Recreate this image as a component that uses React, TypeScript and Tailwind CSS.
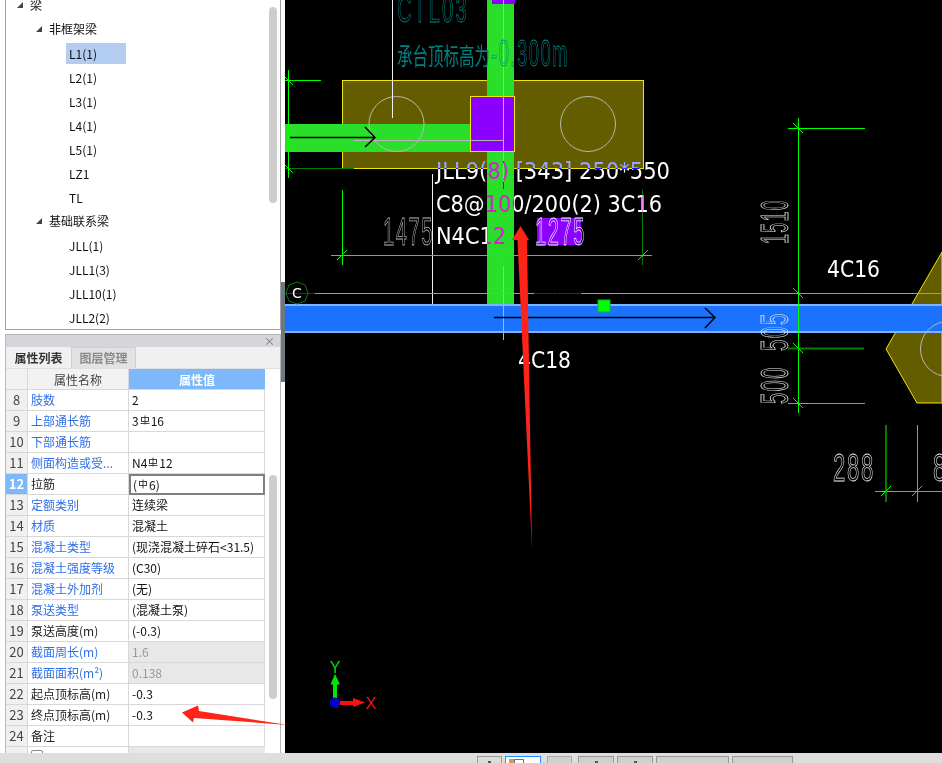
import React from "react";

const font = "font-['Noto_Sans_CJK_SC','Noto_Sans',sans-serif]";

type Row = { n: number; name: string; value: React.ReactNode; blue?: boolean; gray?: boolean };

const Rebar = ({ plain }: { plain?: boolean }) => (
  <svg width="10" height="11" viewBox="0 0 10 11" className="inline-block -mt-[5px] mx-[1px]" fill="none" stroke="#333" strokeWidth="0.9">
    <rect x="1.5" y="2.5" width="7" height="4" />
    <path d="M5 0.5v9" />
    {!plain && <path d="M0.5 8.5h9" />}
  </svg>
);

const rows: Row[] = [
  { n: 8, name: "肢数", value: "2", blue: true },
  { n: 9, name: "上部通长筋", value: <>3<Rebar />16</>, blue: true },
  { n: 10, name: "下部通长筋", value: "", blue: true },
  { n: 11, name: "侧面构造或受...", value: <>N4<Rebar />12</>, blue: true },
  { n: 12, name: "拉筋", value: <>(<Rebar plain />6)</> },
  { n: 13, name: "定额类别", value: "连续梁", blue: true },
  { n: 14, name: "材质", value: "混凝土", blue: true },
  { n: 15, name: "混凝土类型", value: "(现浇混凝土碎石<31.5)", blue: true },
  { n: 16, name: "混凝土强度等级", value: "(C30)", blue: true },
  { n: 17, name: "混凝土外加剂", value: "(无)", blue: true },
  { n: 18, name: "泵送类型", value: "(混凝土泵)", blue: true },
  { n: 19, name: "泵送高度(m)", value: "(-0.3)" },
  { n: 20, name: "截面周长(m)", value: "1.6", blue: true, gray: true },
  { n: 21, name: "截面面积(m²)", value: "0.138", blue: true, gray: true },
  { n: 22, name: "起点顶标高(m)", value: "-0.3" },
  { n: 23, name: "终点顶标高(m)", value: "-0.3" },
  { n: 24, name: "备注", value: "" },
];

const Caret = ({ className }: { className: string }) => (
  <svg width="6" height="6" viewBox="0 0 6 6" className={className}>
    <path d="M6 0V6H0Z" fill="#444" />
  </svg>
);

function TreeRow({ label, level, active }: { label: string; level: 0 | 1 | 2; active?: boolean }) {
  if (level === 2) {
    return (
      <div className="h-6 flex items-center pl-[60px]">
        <span className={`w-[60px] h-[21px] pl-[3px] leading-[21px] ${active ? "bg-[#b2cdf0]" : ""}`}>{label}</span>
      </div>
    );
  }
  return (
    <div className={`h-6 flex items-center ${level === 0 ? "pl-[11px]" : "pl-[30px]"}`}>
      <Caret className="mr-[7px]" />
      <span>{label}</span>
    </div>
  );
}

function Tree() {
  return (
    <div className="h-[330px] border-l border-r border-b border-[#a0a0a0] bg-white overflow-hidden relative text-[12px] text-[#111]">
      <div className="-mt-[7px]">
        <TreeRow label="梁" level={0} />
        <TreeRow label="非框架梁" level={1} />
        <TreeRow label="L1(1)" level={2} active />
        <TreeRow label="L2(1)" level={2} />
        <TreeRow label="L3(1)" level={2} />
        <TreeRow label="L4(1)" level={2} />
        <TreeRow label="L5(1)" level={2} />
        <TreeRow label="LZ1" level={2} />
        <TreeRow label="TL" level={2} />
        <TreeRow label="基础联系梁" level={1} />
        <TreeRow label="JLL(1)" level={2} />
        <TreeRow label="JLL1(3)" level={2} />
        <TreeRow label="JLL10(1)" level={2} />
        <TreeRow label="JLL2(2)" level={2} />
      </div>
      <div className="absolute left-[263px] top-[7px] w-2 h-[196px] rounded bg-[#cdcdcd]" />
    </div>
  );
}

function PropertyRow({ row }: { row: Row }) {
  const selected = row.n === 12;
  return (
    <div className="flex w-[259px] h-[21px] border-b border-[#d8d8d8] leading-[20px]">
      <div className={`w-[22px] shrink-0 text-center text-[13px] border-r border-[#d8d8d8] ${selected ? "bg-[#7db8fb] text-white font-bold" : "bg-[#f0f0f0] text-[#444]"}`}>
        {row.n}
      </div>
      <div className={`w-[101px] shrink-0 pl-[3px] whitespace-nowrap border-r border-[#d8d8d8] ${row.blue ? "text-[#2f6fe8]" : "text-[#222]"}`}>
        {row.name}
      </div>
      {selected ? (
        <div className="w-[136px] h-[21px] shrink-0 pl-[2px] whitespace-nowrap border-2 border-[#808080] leading-[17px] text-[#111]">
          {row.value}
        </div>
      ) : (
        <div className={`w-[136px] shrink-0 pl-[3px] whitespace-nowrap border-r border-[#d8d8d8] ${row.gray ? "bg-[#e8e8e8] text-[#999]" : "text-[#111]"}`}>
          {row.value}
        </div>
      )}
    </div>
  );
}

function Properties() {
  return (
    <div className="mt-[4px] flex-1 border-l border-r border-t border-[#b8b8b8] bg-white overflow-hidden relative text-[12px]">
      <div className="h-[12px] bg-[#d5d6da] flex justify-end items-center pr-[5px] text-[#777] text-[11px] leading-none">×</div>
      <div className="h-[22px] bg-[#f0f0f0] flex border-b border-[#e0e0e0]">
        <div className="w-[65px] text-center leading-[21px] text-[#333] font-bold">属性列表</div>
        <div className="w-[65px] text-center leading-[19px] bg-[#e2e2e2] text-[#8a8a8a] border-l border-r border-t border-[#d0d0d0] font-bold">图层管理</div>
      </div>
      <div className="flex w-[259px] h-[21px] border-b border-[#d8d8d8] leading-[21px]">
        <div className="w-[22px] shrink-0 bg-[#f2f2f2] border-r border-[#d8d8d8]" />
        <div className="w-[101px] shrink-0 bg-[#f2f2f2] text-center text-[#444] border-r border-[#d8d8d8]">属性名称</div>
        <div className="w-[136px] shrink-0 bg-[#7db8fb] text-center text-white font-bold">属性值</div>
      </div>
      {rows.map((row) => (
        <PropertyRow key={row.n} row={row} />
      ))}
      <div className="flex w-[259px] h-[21px] leading-[20px]">
        <div className="w-[22px] shrink-0 bg-[#f0f0f0] border-r border-[#d8d8d8]" />
        <div className="w-[101px] shrink-0 pl-[3px] border-r border-[#d8d8d8]">
          <span className="inline-block mt-[3px] w-[12px] h-[12px] border border-[#888] rounded-[2px] bg-white" />
        </div>
        <div className="w-[136px] shrink-0 bg-[#e8e8e8]" />
      </div>
      <div className="absolute left-[263px] top-[140px] w-2 h-[224px] rounded bg-[#cdcdcd]" />
    </div>
  );
}

const DIM = "#00ff00";
const DARK = "#008000";

const Tick = ({ x, y, c = DIM }: { x: number; y: number; c?: string }) => (
  <path d={`M${x - 5} ${y + 5}L${x + 5} ${y - 5}`} stroke={c} strokeWidth="1" />
);
const TickB = ({ x, y }: { x: number; y: number }) => (
  <path d={`M${x - 5} ${y - 5}L${x + 5} ${y + 5}`} stroke={DIM} strokeWidth="1" />
);

// offsets: drawing coordinates are page pixels, canvas starts at x=285
function Drawing() {
  return (
    <svg viewBox="285 0 657 753" className="block w-full h-full" fontFamily="'DejaVu Sans',sans-serif">
      {/* pile caps */}
      <rect x="342.5" y="80.5" width="301" height="88" fill="#635d00" stroke="#f0e800" strokeWidth="1" />
      <path d="M942 252L886 349L917 403H942Z" fill="#635d00" stroke="#f0e800" strokeWidth="1" />

      {/* beams */}
      <rect x="487" y="0" width="27" height="305" fill="#2adf2a" />
      <rect x="285" y="124" width="186" height="28" fill="#2adf2a" />
      <rect x="285" y="304" width="657" height="29" fill="#1a72ff" />
      <path d="M285 305H942M285 332H942" stroke="#7cb4ff" strokeWidth="2" />
      <rect x="470.5" y="96.5" width="44" height="55" fill="#8b00ff" stroke="#f0e800" />
      <rect x="492" y="0" width="23" height="4" fill="#8b00ff" />
      <rect x="537" y="218" width="44" height="27" fill="#8b00ff" />

      {/* piles */}
      <circle cx="396.5" cy="124" r="27.5" fill="none" stroke="#b8b8b0" />
      <circle cx="588" cy="124" r="27.5" fill="none" stroke="#b8b8b0" />
      <circle cx="948" cy="349" r="27.5" fill="none" stroke="#b8b8b0" />

      {/* centre lines */}
      <path d="M392.5 0V118M432.5 174V304" stroke="#f0f0f0" />
      <path d="M503.5 0V180M503.5 266V340M354 140.5H503" stroke="#b4b4b4" />
      <path d="M314 293.5H534M581 293.5H942" stroke="#9a9a9a" />
      <path d="M285 293.5H315M534 293.5H557M558 293.5H580" stroke="#a00000" />
      <path d="M503.5 180V189" stroke="#c00000" />

      {/* member arrows */}
      <path d="M290 137.5H374M365 127L375 137.5L365 147" fill="none" stroke="#000" strokeWidth="1.5" />
      <path d="M494 317.5H714M705 308L715 317.5L705 328" fill="none" stroke="#000" strokeWidth="1.5" />
      <rect x="598" y="300" width="12" height="12" fill="#00ff00" stroke="#10b040" />

      {/* dimensions */}
      <path d="M288.5 70V178M285 80.5H321M331 255.5H652M342.5 190V265M798.5 118V413M788 128.5H865M788 293.5H864M788 403.5H865M917.5 425V502M875 491.5H942M503.5 240V262" stroke={DIM} />
      <path d="M642.5 190V265M285 168.5H354" stroke={DARK} strokeWidth="1" />
      <path d="M788 348.5H864M886 425V502" stroke={DARK} strokeWidth="2" />
      <Tick x={342} y={255} />
      <Tick x={643} y={255} />
      <Tick x={503} y={255} />
      <Tick x={886} y={491} />
      <Tick x={917} y={491} />
      <TickB x={288} y={80} />
      <TickB x={288} y={168} />
      <TickB x={798} y={128} />
      <TickB x={798} y={293} />
      <TickB x={798} y={348} />
      <TickB x={798} y={403} />

      {/* axis bubble */}
      <polygon points="297,282 305,285 308,293 305,301 297,304 289,301 286,293 289,285" fill="none" stroke="#0a7a0a" />
      <text x="297" y="298" fontSize="14" fill="#fff" textAnchor="middle">C</text>

      {/* teal note */}
      <text x="397" y="22" fontSize="36" fill="none" stroke="#008a8a" strokeWidth="0.8" letterSpacing="4" fontFamily="'Liberation Sans',sans-serif" textLength="72" lengthAdjust="spacingAndGlyphs">CTL03</text>
      <text x="397" y="65" fontSize="24" fill="#008080" fontFamily="'Noto Sans CJK SC',sans-serif" textLength="93" lengthAdjust="spacingAndGlyphs">承台顶标高为</text>
      <text x="491" y="66" fontSize="36" fill="none" stroke="#008a8a" strokeWidth="0.8" letterSpacing="3" fontFamily="'Liberation Sans',sans-serif" textLength="78" lengthAdjust="spacingAndGlyphs">-0.300m</text>

      {/* beam labels, inverted over what they cross */}
      <g fontSize="23" fill="#fff" className="mix-blend-difference">
        <text x="436" y="179" textLength="234" lengthAdjust="spacingAndGlyphs">JLL9(8) [343] 250*550</text>
        <text x="436" y="212" textLength="226" lengthAdjust="spacingAndGlyphs">C8@100/200(2) 3C16</text>
        <text x="436" y="244" textLength="70" lengthAdjust="spacingAndGlyphs">N4C12</text>
      </g>
      <g fontSize="23" fill="#fff">
        <text x="827" y="277" textLength="53" lengthAdjust="spacingAndGlyphs">4C16</text>
        <text x="518" y="368" textLength="53" lengthAdjust="spacingAndGlyphs">4C18</text>
      </g>

      {/* dimension values, the CAD font is a thin outline */}
      <g fontSize="38" fill="none" stroke="#e8e8e8" strokeWidth="0.8" letterSpacing="3" fontFamily="'Liberation Sans',sans-serif">
        <text x="383" y="245" textLength="51" lengthAdjust="spacingAndGlyphs" stroke="#b8b8b8">1475</text>
        <text x="535" y="245" textLength="51" lengthAdjust="spacingAndGlyphs" stroke="#f4f4ff">1275</text>
        <text x="833" y="481" textLength="42" lengthAdjust="spacingAndGlyphs">288</text>
        <text x="933" y="481" textLength="15" lengthAdjust="spacingAndGlyphs">8</text>
        <text transform="translate(788 244) rotate(-90)" textLength="45" lengthAdjust="spacingAndGlyphs">1510</text>
        <text transform="translate(788 351) rotate(-90)" textLength="39" lengthAdjust="spacingAndGlyphs">505</text>
        <text transform="translate(788 404) rotate(-90)" textLength="38" lengthAdjust="spacingAndGlyphs">500</text>
      </g>

      {/* UCS icon */}
      <rect x="333" y="683" width="4" height="15" fill="#00e800" />
      <path d="M335 674L340 684.5H330.5Z" fill="#00e800" />
      <rect x="340" y="701" width="14" height="4" fill="#ff1010" />
      <path d="M365 702.5L353 698V707Z" fill="#ff1010" />
      <circle cx="334.7" cy="702.7" r="5.3" fill="#0000c0" />
      <text x="335" y="673" fontSize="16" fill="#00e000" textAnchor="middle" fontFamily="'Liberation Sans',sans-serif">Y</text>
      <text x="371" y="709" fontSize="16" fill="#ff1010" textAnchor="middle" fontFamily="'Liberation Sans',sans-serif">X</text>
    </svg>
  );
}

function StatusBar() {
  return (
    <div className="h-[10px] bg-[#dedede] flex items-start pt-[3px] pl-[477px] overflow-hidden">
      <div className="w-[25px] h-[10px] border border-[#999] bg-[#dcdcdc] flex justify-center">
        <span className="mt-[4px] w-[3px] h-[2px] bg-[#555]" />
      </div>
      <div className="ml-[3px] w-[36px] h-[10px] border border-[#1e90ff] bg-white pl-[3px] pt-[2px] flex">
        <span className="w-[5px] h-[5px] bg-[#f09030]" />
        <span className="w-[10px] h-[5px] border border-[#5078b0]" />
      </div>
      <div className="ml-[6px] w-[25px] h-[10px] border border-[#aaa] bg-[#d0d0d0]" />
      <div className="ml-[6px] w-[36px] h-[10px] border border-[#999] bg-[#d0d0d0] flex justify-center">
        <span className="mt-[4px] w-[3px] h-[2px] bg-[#555]" />
      </div>
      <div className="ml-[3px] w-[36px] h-[10px] border border-[#999] bg-[#d0d0d0] flex justify-center">
        <span className="mt-[4px] w-[3px] h-[2px] bg-[#555]" />
      </div>
      <div className="ml-[3px] w-[73px] h-[10px] border border-[#999] bg-[#d0d0d0]" />
      <div className="ml-[3px] w-[61px] h-[10px] border border-[#999] bg-[#d0d0d0]" />
    </div>
  );
}

export default function App() {
  return (
    <div className={`w-[942px] h-[763px] overflow-hidden relative bg-[#f0f0f0] flex flex-col ${font}`}>
      <div className="flex flex-1 min-h-0">
        <div className="w-[281px] pl-[5px] flex flex-col bg-white">
          <Tree />
          <Properties />
        </div>
        <div className="w-[4px] bg-white">
          <div className="h-[282px]" />
          <div className="h-[100px] bg-[#6d7880]" />
        </div>
        <div className="flex-1 bg-black">
          <Drawing />
        </div>
      </div>
      <StatusBar />

      {/* red annotation arrows drawn over the screenshot */}
      <svg viewBox="0 0 942 763" className="absolute inset-0 pointer-events-none">
        <path d="M182 712.5L198 705.5L199 711L288 725L194 718L193 722.5Z" fill="#ff2418" />
        <path d="M520.5 226L512 240H517.5L532 550L527 240H529Z" fill="#ff2418" />
      </svg>
    </div>
  );
}
